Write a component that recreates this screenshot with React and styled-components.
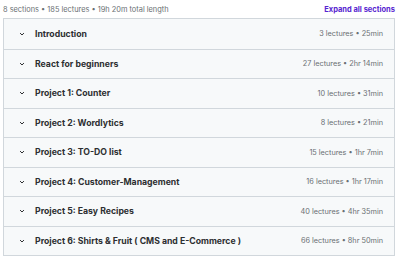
import React from 'react';
import styled, { createGlobalStyle } from 'styled-components';

const Global = createGlobalStyle`
  body {
    margin: 0;
    background: #ffffff;
    font-family: Inter, "Noto Sans", sans-serif;
  }
`;

const Wrapper = styled.div`
  width: 400px;
  padding: 0 5px 0 3px;
  box-sizing: border-box;
`;

const Header = styled.div`
  display: flex;
  justify-content: space-between;
  align-items: center;
  height: 18px;
`;

const Summary = styled.span`
  font-size: 7.4px;
  color: #6a6f73;
`;

const ExpandLink = styled.button`
  background: none;
  border: none;
  padding: 0;
  font-family: inherit;
  font-size: 7.5px;
  font-weight: 700;
  color: #5624d0;
  cursor: pointer;
`;

const List = styled.div`
  border: 1px solid #d1d7dc;
  display: flex;
  flex-direction: column;
`;

const Row = styled.div`
  display: flex;
  align-items: center;
  height: 29.5px;
  box-sizing: border-box;
  padding: 0 11px 0 14px;
  background: #f7f9fa;
  border-top: ${p => (p.first ? 'none' : '1px solid #d1d7dc')};
`;

const Chevron = styled.svg`
  width: 8px;
  height: 8px;
  margin-right: 9px;
  flex-shrink: 0;
`;

const Title = styled.span`
  flex: 1;
  font-size: 8.7px;
  font-weight: 700;
  color: #2d2f31;
`;

const Meta = styled.span`
  font-size: 7.3px;
  color: #6a6f73;
`;

const sections = [
  ['Introduction', '3 lectures • 25min'],
  ['React for beginners', '27 lectures • 2hr 14min'],
  ['Project 1: Counter', '10 lectures • 31min'],
  ['Project 2: Wordlytics', '8 lectures • 21min'],
  ['Project 3: TO-DO list', '15 lectures • 1hr 7min'],
  ['Project 4: Customer-Management', '16 lectures • 1hr 17min'],
  ['Project 5: Easy Recipes', '40 lectures • 4hr 35min'],
  ['Project 6: Shirts & Fruit ( CMS and E-Commerce )', '66 lectures • 8hr 50min'],
];

const App = () => {
  return (
    <>
      <Global />
      <Wrapper>
        <Header>
          <Summary>8 sections • 185 lectures • 19h 20m total length</Summary>
          <ExpandLink>Expand all sections</ExpandLink>
        </Header>
        <List>
          {sections.map(([title, meta], i) => (
            <Row key={title} first={i === 0}>
              <Chevron viewBox="0 0 24 24" fill="none" stroke="#2d2f31" strokeWidth="3" strokeLinecap="round" strokeLinejoin="round">
                <path d="M7 10l5 5 5-5" />
              </Chevron>
              <Title>{title}</Title>
              <Meta>{meta}</Meta>
            </Row>
          ))}
        </List>
      </Wrapper>
    </>
  );
};

export default App;
